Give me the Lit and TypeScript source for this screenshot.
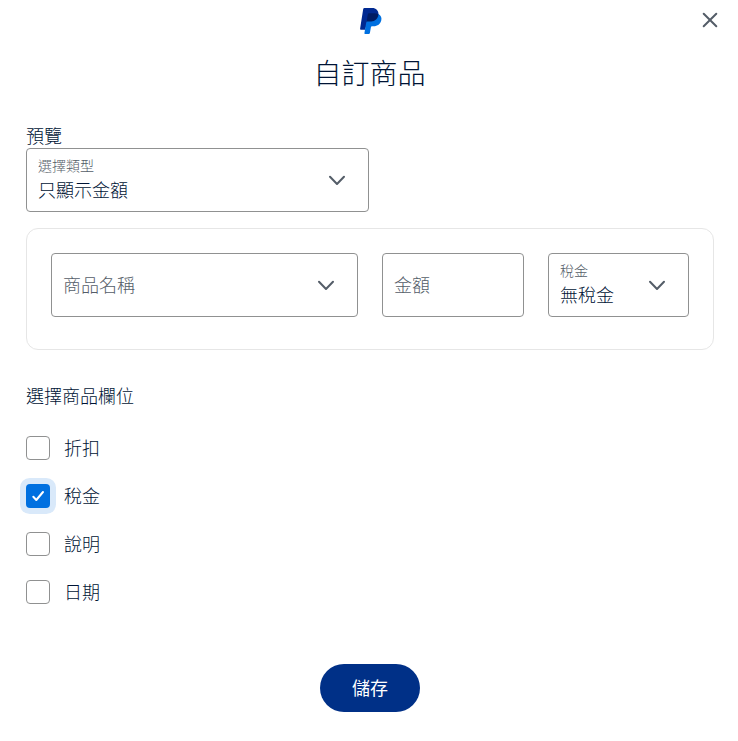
import { LitElement, html, svg, css } from "lit";
import { customElement, property, state } from "lit/decorators.js";
import { classMap } from "lit/directives/class-map.js";

const chevron = svg`<path d="M5 8.8 12 16 19 8.8" fill="none" stroke="#545d68" stroke-width="2" stroke-linecap="round" stroke-linejoin="round" />`;

@customElement("pp-field")
export class PpField extends LitElement {
  @property() label = "";
  @property() value = "";
  @property({ type: Boolean }) dropdown = false;

  static styles = css`
    :host {
      display: flex;
      align-items: center;
      justify-content: space-between;
      box-sizing: border-box;
      height: 64px;
      padding: 0 19px 0 11px;
      border: 1px solid #909191;
      border-radius: 4px;
      background: #fff;
      cursor: pointer;
    }

    .text {
      display: flex;
      flex-direction: column;
      padding-bottom: 2px;
      white-space: nowrap;
    }

    .label {
      font-size: 14px;
      line-height: 20px;
      color: #545d68;
    }

    .value {
      font-size: 18px;
      line-height: 28px;
      color: #001435;
    }

    .placeholder {
      font-size: 18px;
      line-height: 24px;
      color: #545d68;
    }

    svg {
      width: 24px;
      height: 24px;
    }
  `;

  render() {
    return html`
      <div class="text">
        ${this.value
          ? html`<span class="label">${this.label}</span>
              <span class="value">${this.value}</span>`
          : html`<span class="placeholder">${this.label}</span>`}
      </div>
      ${this.dropdown ? html`<svg viewBox="0 0 24 24">${chevron}</svg>` : ""}
    `;
  }
}

@customElement("pp-checkbox")
export class PpCheckbox extends LitElement {
  @property() label = "";
  @property({ type: Boolean }) checked = false;
  @property({ type: Boolean }) focused = false;

  static styles = css`
    :host {
      display: flex;
      align-items: center;
      gap: 14px;
      height: 24px;
      font-size: 18px;
      line-height: 24px;
      cursor: pointer;
    }

    .box {
      display: flex;
      box-sizing: border-box;
      width: 24px;
      height: 24px;
      border: 1px solid #909191;
      border-radius: 4px;
    }

    .checked {
      border: 0;
      background: #0070e0;
    }

    .focused {
      box-shadow: 0 0 0 6px #d9e9fa;
    }

    .name {
      padding-bottom: 2px;
    }
  `;

  render() {
    return html`
      <span class=${classMap({ box: true, checked: this.checked, focused: this.focused })}>
        ${this.checked
          ? html`<svg width="24" height="24" viewBox="0 0 24 24">
              <path d="M7.3 12.8 10.3 16 17 8" fill="none" stroke="#fff" stroke-width="2" stroke-linecap="round" stroke-linejoin="round" />
            </svg>`
          : ""}
      </span>
      <span class="name">${this.label}</span>
    `;
  }
}

@customElement("app-root")
export class AppRoot extends LitElement {
  @state() private fields = [
    { label: "折扣", checked: false },
    { label: "稅金", checked: true },
    { label: "說明", checked: false },
    { label: "日期", checked: false },
  ];

  @state() private focusedIndex = 1;

  static styles = css`
    :host {
      display: block;
      box-sizing: border-box;
      height: 741px;
      background: #fff;
      color: #001435;
      font-family: "Noto Sans CJK TC", sans-serif;
      font-weight: 300;
    }

    header {
      display: grid;
      grid-template-columns: 1fr 24px 1fr;
      height: 40px;
      padding: 0 16px 0 20px;
    }

    .logo {
      width: 24px;
      height: 28px;
      margin-top: 7px;
    }

    .close {
      justify-self: end;
      width: 24px;
      height: 24px;
      margin-top: 8px;
      cursor: pointer;
    }

    h1 {
      margin: 14px 0 0;
      padding-left: 1px;
      font-size: 28px;
      line-height: 36px;
      font-weight: 300;
      text-align: center;
    }

    main {
      padding: 33px 24px 0 26px;
    }

    .section {
      padding-bottom: 1px;
      font-size: 18px;
      line-height: 24px;
    }

    .type {
      width: 343px;
    }

    .preview {
      display: grid;
      grid-template-columns: 307px 142px 141px;
      gap: 24px;
      box-sizing: border-box;
      height: 122px;
      margin: 16px 0 33px;
      padding: 24px;
      border: 1px solid #e6e6e6;
      border-radius: 12px;
    }

    .options {
      display: flex;
      flex-direction: column;
      gap: 24px;
      margin-top: 28px;
    }

    footer {
      display: flex;
      justify-content: center;
      padding: 60px 0 0 2px;
    }

    button {
      width: 100px;
      height: 48px;
      padding: 0 0 2px;
      border: 0;
      border-radius: 24px;
      background: #003087;
      color: #fff;
      font: 400 18px/24px "Noto Sans CJK TC", sans-serif;
      cursor: pointer;
    }
  `;

  private toggle(index: number) {
    this.focusedIndex = index;
    this.fields = this.fields.map((f, i) => (i === index ? { ...f, checked: !f.checked } : f));
  }

  render() {
    return html`
      <header>
        <span></span>
        <svg class="logo" viewBox="0 0 24 28">
          <path fill="#002991" d="M5.4 1H13.4C16.8 1 19.7 3.7 19.5 7.2L14 15H8.5L6.1 22.7H1.8C1.3 22.7 1 22.3 1.1 21.8L4.2 2C4.3 1.4 4.8 1 5.4 1Z" />
          <path fill="#0070e0" d="M19.5 6.9C21.9 8.2 22.9 10.5 22.3 13.2 21.5 17 18.5 19.2 14.6 19.2H13.2C12.5 19.2 12 19.7 11.9 20.3L10.9 26.1C10.8 26.7 10.3 27 9.8 27H6.1C5.6 27 5.3 26.7 5.4 26.2L7.3 15 10 8Z" />
          <path fill="#001c64" d="M19.5 7.2C18.2 6.5 16.7 6.2 15.2 6.2H10.2C9.5 6.2 8.9 6.7 8.8 7.4L7.3 15.8C7.5 14.9 8 14.4 8.8 14.4H12.2C16 14.4 19.1 11.6 19.5 7.2Z" />
        </svg>
        <svg class="close" viewBox="0 0 24 24">
          <path d="M5.7 5.7 18.3 18.3M18.3 5.7 5.7 18.3" fill="none" stroke="#545d68" stroke-width="2" stroke-linecap="round" />
        </svg>
      </header>
      <h1>自訂商品</h1>
      <main>
        <div class="section">預覽</div>
        <pp-field class="type" label="選擇類型" value="只顯示金額" dropdown></pp-field>
        <div class="preview">
          <pp-field label="商品名稱" dropdown></pp-field>
          <pp-field label="金額"></pp-field>
          <pp-field label="稅金" value="無稅金" dropdown></pp-field>
        </div>
        <div class="section">選擇商品欄位</div>
        <div class="options">
          ${this.fields.map(
            (f, i) => html`<pp-checkbox
              .label=${f.label}
              .checked=${f.checked}
              .focused=${i === this.focusedIndex}
              @click=${() => this.toggle(i)}
            ></pp-checkbox>`
          )}
        </div>
      </main>
      <footer><button>儲存</button></footer>
    `;
  }
}
